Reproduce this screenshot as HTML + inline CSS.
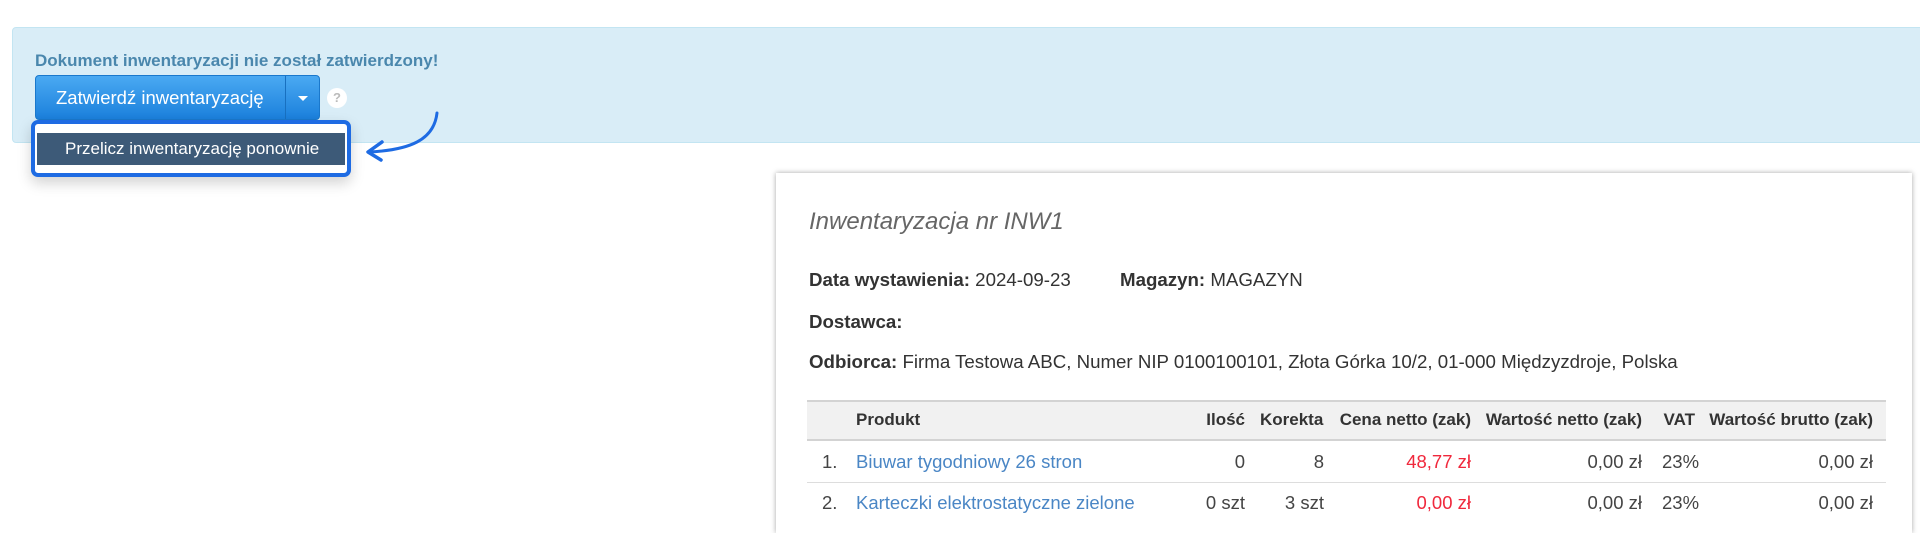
<!DOCTYPE html>
<html><head><meta charset="utf-8"><style>
body{margin:0;width:1920px;height:520px;background:#fff;font-family:"Liberation Sans",Arial,sans-serif;position:relative;overflow:hidden}
.a{position:absolute}
.alert{left:12px;top:27px;width:1920px;height:116px;background:#d9edf7;border:1px solid #c3e5f2;border-radius:4px;box-sizing:border-box}
.amsg{left:35px;top:51px;font-size:17px;font-weight:bold;color:#4a87ad;white-space:nowrap}
.btn{left:35px;top:75px;width:285px;height:45px;border-radius:4px;background:linear-gradient(#4aa9f2,#1b80dc);border:1px solid #1a78cc;box-sizing:border-box}
.btn .t{position:absolute;left:20px;top:11px;color:#fff;font-size:18.5px;white-space:nowrap}
.btn .sep{position:absolute;left:249px;top:0;width:1px;height:43px;background:#1870c0}
.caret{position:absolute;left:262px;top:20px;width:0;height:0;border-left:5px solid transparent;border-right:5px solid transparent;border-top:5px solid #fff}
.q{left:327px;top:88px;width:20px;height:20px;border-radius:50%;background:#fff;color:#bbb;font-size:13px;font-weight:bold;text-align:center;line-height:20px}
.dd{left:31px;top:120px;width:320px;height:57px;border:4px solid #1e6be3;border-radius:7px;background:#fff;box-sizing:border-box;box-shadow:0 6px 14px rgba(0,0,0,.18)}
.dd .it{position:absolute;left:2px;right:2px;top:9px;height:32px;background:#3d5a78;color:#fff;font-size:17px;line-height:32px;padding-left:28px}
.panel{left:776px;top:173px;width:1136px;height:360px;background:#fff;box-shadow:0 0 5px rgba(0,0,0,.35)}
.title{left:809px;top:208px;font-size:24px;font-style:italic;color:#666;white-space:nowrap}
.l{font-size:18.7px;color:#333;white-space:nowrap}
.th{left:807px;top:400px;width:1079px;height:41px;background:#f1f1f1;border-top:2px solid #d3d3d3;border-bottom:2px solid #d3d3d3;box-sizing:border-box}
.c{position:absolute;font-size:18.5px;color:#444;white-space:nowrap}
.h{font-weight:bold;top:410px;font-size:17px;color:#333}
.r{text-align:right}
.link{color:#4a86c5}
.red{color:#f0283c}
.rl{left:807px;width:1079px;top:482px;height:1px;background:#ddd}
</style></head><body>
<div class="a alert"></div>
<div class="a amsg">Dokument inwentaryzacji nie został zatwierdzony!</div>
<div class="a btn"><span class="t">Zatwierdź inwentaryzację</span><span class="sep"></span><span class="caret"></span></div>
<div class="a q">?</div>
<div class="a dd"><div class="it">Przelicz inwentaryzację ponownie</div></div>
<svg class="a" style="left:0;top:0" width="480" height="200"><path d="M437 113 C434 140 410 150 369 152" fill="none" stroke="#1e6be3" stroke-width="3" stroke-linecap="round"/><path d="M382 142 L368 152 L381 160" fill="none" stroke="#1e6be3" stroke-width="3.5" stroke-linecap="round" stroke-linejoin="round"/></svg>

<div class="a panel"></div>
<div class="a title">Inwentaryzacja nr INW1</div>
<div class="a l" style="left:809px;top:269px"><b>Data wystawienia:</b> 2024-09-23</div>
<div class="a l" style="left:1120px;top:269px"><b>Magazyn:</b> MAGAZYN</div>
<div class="a l" style="left:809px;top:311px"><b>Dostawca:</b></div>
<div class="a l" style="left:809px;top:351px"><b>Odbiorca:</b> Firma Testowa ABC, Numer NIP 0100100101, Złota Górka 10/2, 01-000 Międzyzdroje, Polska</div>

<div class="a th"></div>
<div class="c h" style="left:856px">Produkt</div>
<div class="c h r" style="right:675px">Ilość</div>
<div class="c h" style="left:1260px">Korekta</div>
<div class="c h r" style="right:449px">Cena netto (zak)</div>
<div class="c h r" style="right:278px">Wartość netto (zak)</div>
<div class="c h r" style="right:225px">VAT</div>
<div class="c h r" style="right:47px">Wartość brutto (zak)</div>

<div class="c" style="left:822px;top:451px">1.</div>
<div class="c link" style="left:856px;top:451px">Biuwar tygodniowy 26 stron</div>
<div class="c r" style="right:675px;top:451px">0</div>
<div class="c r" style="right:596px;top:451px">8</div>
<div class="c r red" style="right:449px;top:451px">48,77 zł</div>
<div class="c r" style="right:278px;top:451px">0,00 zł</div>
<div class="c" style="left:1662px;top:451px">23%</div>
<div class="c r" style="right:47px;top:451px">0,00 zł</div>
<div class="a rl"></div>
<div class="c" style="left:822px;top:492px">2.</div>
<div class="c link" style="left:856px;top:492px">Karteczki elektrostatyczne zielone</div>
<div class="c r" style="right:675px;top:492px">0 szt</div>
<div class="c r" style="right:596px;top:492px">3 szt</div>
<div class="c r red" style="right:449px;top:492px">0,00 zł</div>
<div class="c r" style="right:278px;top:492px">0,00 zł</div>
<div class="c" style="left:1662px;top:492px">23%</div>
<div class="c r" style="right:47px;top:492px">0,00 zł</div>
</body></html>
